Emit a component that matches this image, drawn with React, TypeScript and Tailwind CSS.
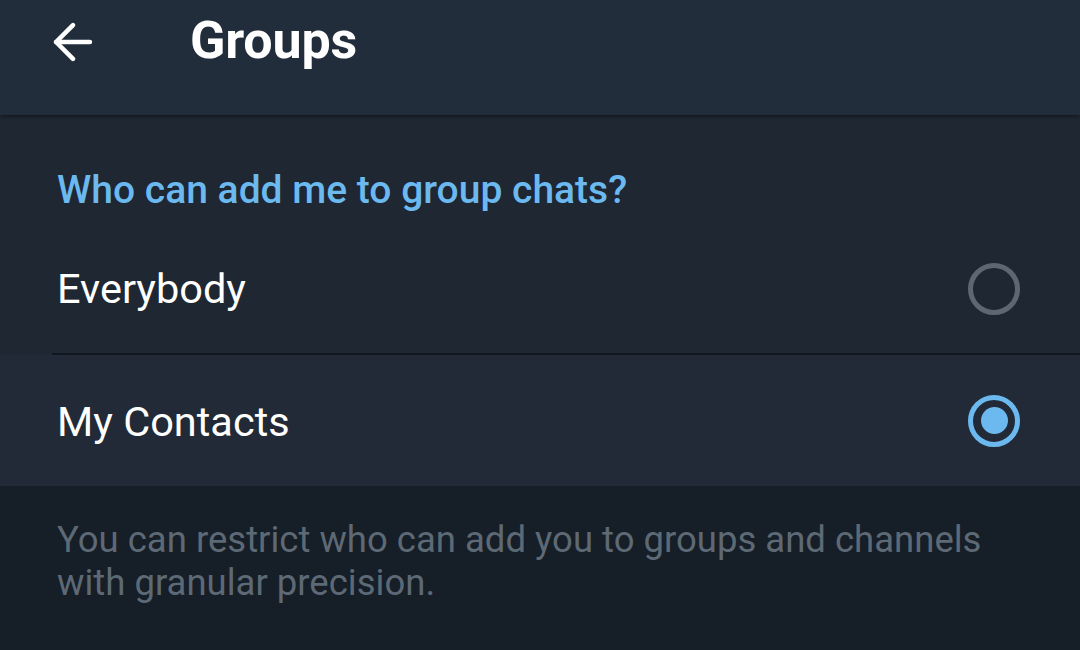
import { ArrowLeft } from 'lucide-react'

const font = { fontFamily: 'Roboto, "Noto Sans", sans-serif' }

function Radio({ checked }: { checked: boolean }) {
    if (checked) {
        return (
            <div className="w-[52px] h-[52px] rounded-full border-[5px] border-[#6bb9ef] flex items-center justify-center">
                <div className="w-[27px] h-[27px] rounded-full bg-[#6bb9ef]" />
            </div>
        )
    }
    return <div className="w-[52px] h-[52px] rounded-full border-[5px] border-[#5c6772]" />
}

export default function App() {
    return (
        <div className="w-[1080px] h-[650px] overflow-hidden bg-[#161e27] flex flex-col" style={font}>
            {/* Top bar */}
            <div className="h-[115px] bg-[#222d3b] flex items-start shrink-0 shadow-[0_2px_3px_rgba(0,0,0,0.35)] relative z-10">
                <div className="w-[190px] pl-[44px] pt-[13px]">
                    <ArrowLeft className="text-white" size={58} strokeWidth={1.9} />
                </div>
                <h1 className="text-white font-bold text-[52px] leading-none pt-[15px] tracking-[-0.2px]">Groups</h1>
            </div>

            {/* Options */}
            <div className="bg-[#1e2732]">
                <div className="h-[105px] flex items-end pl-[57px] pb-[10px]">
                    <span className="text-[#6bb9ef] font-medium text-[39px] leading-none">Who can add me to group chats?</span>
                </div>
                <div className="h-[133px] flex items-center justify-between pl-[57px] pr-[60px] pt-[4px]">
                    <span className="text-white text-[41.5px] leading-none">Everybody</span>
                    <Radio checked={false} />
                </div>
                <div className="ml-[52px] h-[2px] bg-[#101720]" />
                <div className="h-[131px] bg-[#212a36] flex items-center justify-between pl-[57px] pr-[60px]">
                    <span className="text-white text-[41.5px] leading-none pt-[2px]">My Contacts</span>
                    <Radio checked={true} />
                </div>
            </div>

            {/* Footer note */}
            <div className="px-[57px] pt-[32px] text-[#5d6975] text-[36.5px] leading-[43px] whitespace-nowrap">
                You can restrict who can add you to groups and channels
                <br />
                with granular precision.
            </div>
        </div>
    )
}
